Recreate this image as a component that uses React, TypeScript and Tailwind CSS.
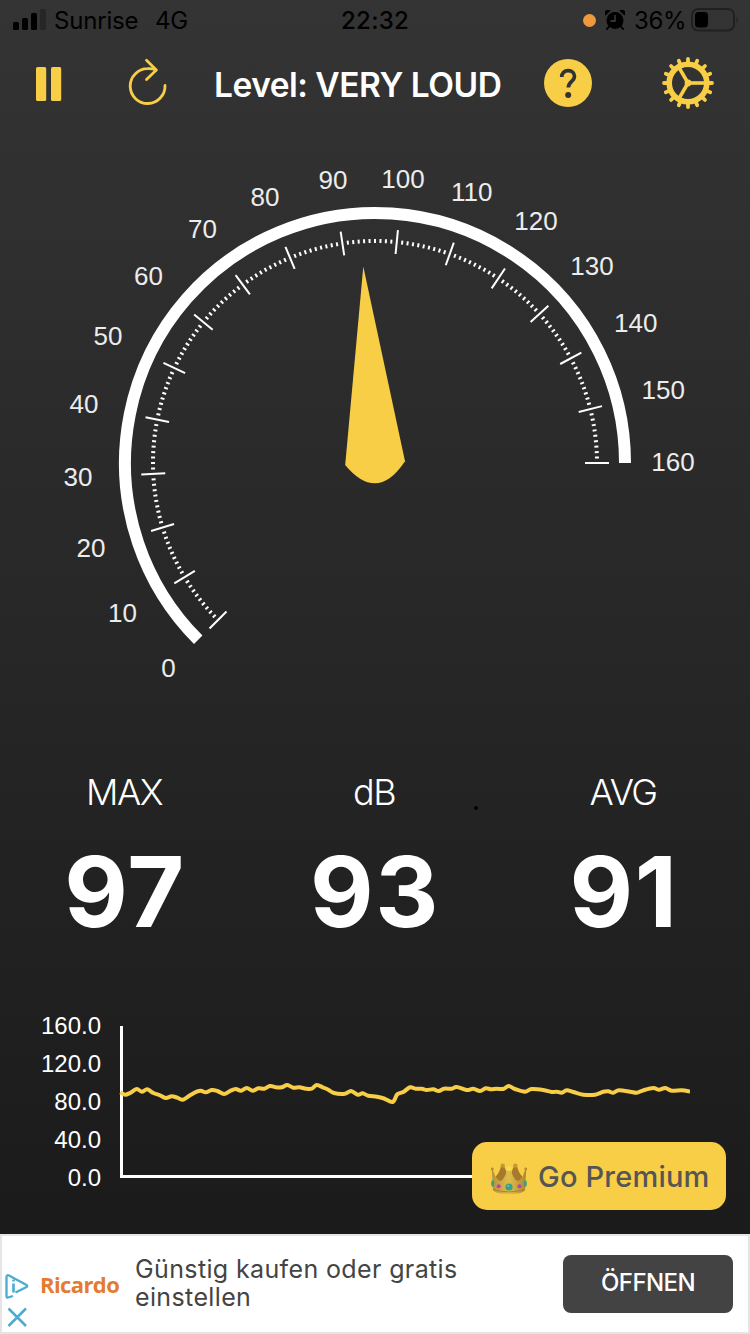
const CX = 375;
const CY = 463;

const polar = (r: number, deg: number): [number, number] => {
  const a = (deg * Math.PI) / 180;
  return [CX + r * Math.cos(a), CY - r * Math.sin(a)];
};

const scaleLabels: [string, number, number][] = [
  ["0", 168.5, 668],
  ["10", 122.5, 613],
  ["20", 91, 548],
  ["30", 78, 476.5],
  ["40", 84, 404],
  ["50", 108, 335.5],
  ["60", 148.5, 276],
  ["70", 202.5, 229],
  ["80", 265, 197],
  ["90", 333, 180],
  ["100", 403, 179],
  ["110", 471.8, 192],
  ["120", 536, 221],
  ["130", 592, 265.5],
  ["140", 635.8, 323],
  ["150", 663.3, 390],
  ["160", 673, 462],
];

function Gauge() {
  const [sx, sy] = polar(250, 225);
  const [ex, ey] = polar(250, 0);
  const ticks = Array.from({ length: 161 }, (_, i) => {
    const deg = 225 - (i * 225) / 160;
    const major = i % 10 === 0;
    const [x1, y1] = polar(major ? 210 : 220, deg);
    const [x2, y2] = polar(major ? 234 : 224, deg);
    return <line key={i} x1={x1} y1={y1} x2={x2} y2={y2} stroke="#fff" strokeWidth={2} />;
  });
  return (
    <svg viewBox="0 126 750 584" className="block h-[584px] w-[750px]">
      <path d={`M${sx} ${sy}A250 250 0 1 1 ${ex} ${ey}`} fill="none" stroke="#fff" strokeWidth={12} />
      {ticks}
      <path d="M363.3 266.5L405 461.3Q377 503.5 345.2 465Z" fill="#f8ce46" />
      {scaleLabels.map(([t, x, y]) => (
        <text
          key={t}
          x={x}
          y={y + 9}
          textAnchor="middle"
          fill="#ececec"
          className="font-['Liberation_Sans',sans-serif] text-[26px]"
        >
          {t}
        </text>
      ))}
    </svg>
  );
}

const samples: [number, number][] = [
  [120.3, 1092.3], [125, 1094.7], [130, 1093], [136.7, 1089], [141.7, 1091.7], [147.3, 1089.3],
  [153.3, 1093], [159.3, 1095], [165.7, 1098], [171.7, 1096.3], [177.3, 1097.7], [182.7, 1099.7],
  [190, 1095.3], [196.7, 1091.7], [201, 1090.7], [205.7, 1092.3], [211.7, 1090], [217.3, 1091],
  [224, 1094], [230, 1091], [235.7, 1089], [241, 1090.7], [246.7, 1088], [252.7, 1090.7],
  [258.3, 1088.3], [264.3, 1088.7], [270, 1086], [276, 1087.3], [281.7, 1087.3], [287.3, 1085],
  [293.3, 1087.7], [299.3, 1087.3], [306, 1088.7], [311.7, 1088.7], [316.7, 1085], [322.7, 1087.3],
  [328.3, 1089.7], [334, 1093], [345, 1093.7], [351, 1091], [357.7, 1094.7], [362.7, 1093.3],
  [368.3, 1095.7], [377, 1096.7], [384, 1098.5], [392.7, 1102], [397.3, 1094.3], [403.3, 1092],
  [410, 1087.3], [415.7, 1088.7], [421.7, 1088.7], [426.7, 1090], [433.3, 1089.3], [438.7, 1091],
  [444, 1088.7], [451.7, 1088.7], [456.7, 1087], [466.7, 1090], [473.3, 1088.7], [480, 1091],
  [485.7, 1088.3], [491, 1089.3], [496.7, 1088.7], [503.3, 1089], [508.7, 1086], [515, 1089],
  [525, 1091.7], [531.7, 1089], [543.3, 1090], [551.7, 1092], [556.7, 1091.7], [561.7, 1092.7],
  [566.7, 1090.3], [573.3, 1092], [583.3, 1094.7], [595, 1094.7], [603.3, 1091.7], [608.3, 1091.3],
  [613.3, 1092.7], [619, 1090.3], [630, 1091.7], [636.7, 1092.7], [643.3, 1090.3], [653.3, 1088],
  [659, 1089.7], [665.3, 1088], [671.7, 1090.7], [681.7, 1090.3], [690, 1091.5],
];

const smooth = (p: [number, number][]) =>
  p.reduce((d, [x, y], i) => {
    if (i === 0) return `M${x} ${y}`;
    const [px, py] = p[i - 1];
    const [ax, ay] = p[Math.max(i - 2, 0)];
    const [bx, by] = p[Math.min(i + 1, p.length - 1)];
    return `${d}C${px + (x - ax) / 6} ${py + (y - ay) / 6} ${x - (bx - px) / 6} ${y - (by - py) / 6} ${x} ${y}`;
  }, "");

function History() {
  return (
    <div className="flex h-[152px] w-[690px]">
      <div className="-mt-[19px] flex w-[101px] flex-col text-right font-['Liberation_Sans',sans-serif] text-[24px] leading-[38px] text-white">
        <span>160.0</span>
        <span>120.0</span>
        <span>80.0</span>
        <span>40.0</span>
        <span>0.0</span>
      </div>
      <svg viewBox="101 1026 589 152" className="block h-[152px] w-[589px]">
        <path d="M121.5 1026V1176.5H690" fill="none" stroke="#fff" strokeWidth={3} />
        <path d={smooth(samples)} fill="none" stroke="#f8ce46" strokeWidth={4} strokeLinejoin="round" />
      </svg>
    </div>
  );
}

function Crown() {
  return (
    <svg viewBox="0 0 36 32" className="mt-[3px] block h-[32px] w-[36px]">
      <defs>
        <linearGradient id="band" x1="0" x2="1" y1="0" y2="0">
          <stop offset="0" stopColor="#b8943a" />
          <stop offset="0.5" stopColor="#e0bd48" />
          <stop offset="1" stopColor="#ad8832" />
        </linearGradient>
      </defs>
      <path d="M10 3H13L15.500 9L14 18H7L4.500 13.500Q8.500 10 10 3Z" fill="#a67a2c" />
      <path d="M26 3H23L20.500 9L22 18H29L31.500 13.500Q27.500 10 26 3Z" fill="#a67a2c" />
      <path
        d="M.8 7H1.900L4.800 14.500Q7 18.500 10.500 17.500Q14 15 16.500 6H19.500Q22 15 25.500 17.500Q29 18.500 31.200 14.500L34.100 7H35.200L34 27.500Q31 31 18 31Q5 31 2 27.500Z"
        fill="url(#band)"
      />
      <path d="M2.300 26.300Q18 31.500 33.700 26.300" fill="none" stroke="#a07a2a" strokeWidth="0.8" />
      <circle cx="11.700" cy="2.600" r="2.200" fill="#c09a38" />
      <circle cx="24.300" cy="2.600" r="2.200" fill="#c09a38" />
      <circle cx="18" cy="5.600" r="2.500" fill="#f4de4e" />
      <circle cx="1.300" cy="6" r="1.400" fill="#b08c38" />
      <circle cx="34.700" cy="6" r="1.400" fill="#b08c38" />
      <circle cx="18" cy="24" r="3.600" fill="#3a9f84" />
      <circle cx="17.200" cy="23" r="1.200" fill="#5cbb9c" />
      <circle cx="7.700" cy="23.300" r="2" fill="#c03eb4" />
      <circle cx="28.500" cy="23.300" r="2" fill="#c03eb4" />
      <ellipse cx="1.700" cy="20.500" rx="1.500" ry="3.200" fill="#3a9f84" />
      <ellipse cx="34.300" cy="20.500" rx="1.500" ry="3.200" fill="#3a9f84" />
    </svg>
  );
}

function StatusBar() {
  return (
    <div className="flex h-[40px] items-center text-[24px] leading-[40px] text-black">
      <svg viewBox="0 0 34 22" className="ml-[13px] h-[22px] w-[34px]">
        <rect x="0" y="13" width="6" height="8" rx="1.500" />
        <rect x="9" y="9" width="6" height="12" rx="1.500" />
        <rect x="18" y="4" width="6" height="17" rx="1.500" />
        <rect x="27" y="0" width="6" height="21" rx="1.500" fill="#262626" />
      </svg>
      <span className="mt-[2px] ml-[7px] w-[101px] tracking-[-0.2px]">Sunrise</span>
      <span className="mt-[2px] w-[186px] tracking-[-0.3px]">4G</span>
      <span className="mt-[2px] w-[242px] font-medium tracking-[0.3px]">22:32</span>
      <span className="h-[13px] w-[13px] rounded-full bg-[#ee9a3c]" />
      <svg viewBox="0 0 20 20" className="ml-[9px] h-[20px] w-[20px]">
        <circle cx="10" cy="10.500" r="8.500" />
        <path d="M.5 5.500A3 3 0 0 1 5.500 .8ZM19.500 5.500A3 3 0 0 0 14.500 .8Z" />
        <path d="M4 16.500L2 19M16 16.500L18 19" stroke="#000" strokeWidth="2" strokeLinecap="round" />
        <path d="M10 5V11H5.500" fill="none" stroke="#444" strokeWidth="1.300" />
      </svg>
      <span className="mt-[2px] ml-[9px] w-[57px] tracking-[-0.4px]">36%</span>
      <svg viewBox="0 0 48 24" className="h-[24px] w-[48px]">
        <rect x="1" y="1" width="42" height="21.500" rx="6" fill="none" stroke="#202020" strokeWidth="2" />
        <rect x="4" y="4" width="13" height="15.500" rx="3.500" />
        <path d="M45.500 8.500Q48 11.800 45.500 15.500Z" fill="#202020" />
      </svg>
    </div>
  );
}

function PauseIcon() {
  return (
    <svg viewBox="0 0 26 34" className="mt-[2px] ml-[36px] h-[34px] w-[26px]" fill="currentColor">
      <rect x="0" y="0" width="10.200" height="34" rx="1.600" />
      <rect x="15" y="0" width="10.200" height="34" rx="1.600" />
    </svg>
  );
}

function RefreshIcon() {
  return (
    <svg
      viewBox="127 56 42 50"
      className="-mt-[3px] ml-[65px] h-[50px] w-[42px]"
      fill="none"
      stroke="currentColor"
      strokeWidth="2.800"
      strokeLinecap="round"
      strokeLinejoin="round"
    >
      <path d="M165 84.500A17.400 17.400 0 1 1 147.500 67.700Q152 67.300 156 69" />
      <path d="M146.500 59.300L156.300 69L146.500 78.500" />
    </svg>
  );
}

function HelpIcon() {
  return (
    <svg viewBox="0 0 48 48" className="h-[48px] w-[48px]">
      <circle cx="24" cy="24" r="24" fill="currentColor" />
      <path
        d="M17.700 18C17.700 14 20.500 11.700 24.200 11.700C28 11.700 30.500 14.200 30.500 17.500C30.500 22.200 24.300 22.600 24.300 28.600"
        fill="none"
        stroke="#323232"
        strokeWidth="3.700"
      />
      <circle cx="24.200" cy="36" r="3" fill="#323232" />
    </svg>
  );
}

function GearIcon() {
  return (
    <svg viewBox="-26 -26 52 52" className="ml-[70px] h-[52px] w-[52px]" stroke="currentColor" fill="none">
      {Array.from({ length: 16 }, (_, i) => (
        <line
          key={i}
          x1="20"
          x2="24"
          y1="0"
          y2="0"
          strokeWidth="3.800"
          strokeLinecap="round"
          transform={`rotate(${i * 22.5})`}
        />
      ))}
      <circle r="18.800" strokeWidth="5.600" />
      {[0, 120, 240].map((a) => (
        <line key={a} x1="0" x2="17" y1="0" y2="0" strokeWidth="3.600" transform={`rotate(${a})`} />
      ))}
      <circle r="3.400" fill="currentColor" stroke="none" />
    </svg>
  );
}

function Header() {
  return (
    <div className="flex h-[86px] items-center text-[#f8ce46]">
      <PauseIcon />
      <RefreshIcon />
      <h1 className="mt-[4px] ml-[45px] w-[330px] whitespace-nowrap text-[33.500px] font-semibold tracking-[-0.5px] text-white">
        Level: VERY LOUD
      </h1>
      <HelpIcon />
      <GearIcon />
    </div>
  );
}

function Stat({ label, value }: { label: string; value: string }) {
  return (
    <div className="flex flex-col items-center">
      <span className="mr-[2px] text-[36px] leading-[44px] font-light tracking-[-1.500px]">{label}</span>
      <span className="mt-[28px] text-[98px] leading-[100px] font-bold tracking-[1.500px]">{value}</span>
    </div>
  );
}

function AdBanner() {
  return (
    <div className="flex h-[100px] items-center border-2 border-[#e5e5e5] bg-white">
      <svg viewBox="0 0 24 56" className="mt-[33px] ml-[3px] h-[56px] w-[24px]" fill="none" stroke="#4aacd0">
        <path d="M8 23L3 24.500Q1.500 25 1.500 23V4Q1.500 1.500 4 2.500L21.500 12Q23 13 21.500 14L10.500 19.500" strokeWidth="2.300" />
        <path d="M8.500 10.500V19.500M8.500 6.500V8.500" strokeWidth="2.600" />
        <path d="M3.500 35.500L21 53M21 35.500L3.500 53" strokeWidth="2.500" />
      </svg>
      <span className="ml-[11px] w-[95px] font-['Open_Sans',sans-serif] text-[22px] font-bold tracking-[-0.6px] text-[#e47b30]">
        Ricardo
      </span>
      <p className="-mt-[2px] w-[428px] text-[25px] leading-[28px] tracking-[0.37px] whitespace-nowrap text-[#444]">
        Günstig kaufen oder gratis
        <br />
        einstellen
      </p>
      <button className="h-[58px] w-[170px] rounded-[8px] bg-[#434343] pb-[2px] text-[24px] font-medium tracking-[-0.6px] text-white">
        ÖFFNEN
      </button>
    </div>
  );
}

export default function App() {
  return (
    <div className="relative h-[1334px] w-[750px] overflow-hidden bg-[#1c1c1c] font-['Inter',sans-serif]">
      <div className="flex h-[1234px] flex-col bg-linear-to-b from-[#343434] to-[#1b1b1b]">
        <StatusBar />
        <Header />
        <Gauge />
        <div className="mt-[60px] grid h-[256px] grid-cols-[250px_250px_248px] text-white">
          <Stat label="MAX" value="97" />
          <Stat label="dB" value="93" />
          <Stat label="AVG" value="91" />
        </div>
        <History />
      </div>
      <span className="absolute top-[806px] left-[474px] h-[4px] w-[4px] rounded-full bg-black" />
      <button className="absolute top-[1142px] left-[472px] flex h-[68px] w-[254px] items-center rounded-[15px] bg-[#f8ce46] pt-[2px] pl-[19px] text-[29px] font-medium tracking-[0.2px] text-[#555]">
        <Crown />
        <span className="ml-[11px] whitespace-nowrap">Go Premium</span>
      </button>
      <AdBanner />
    </div>
  );
}
